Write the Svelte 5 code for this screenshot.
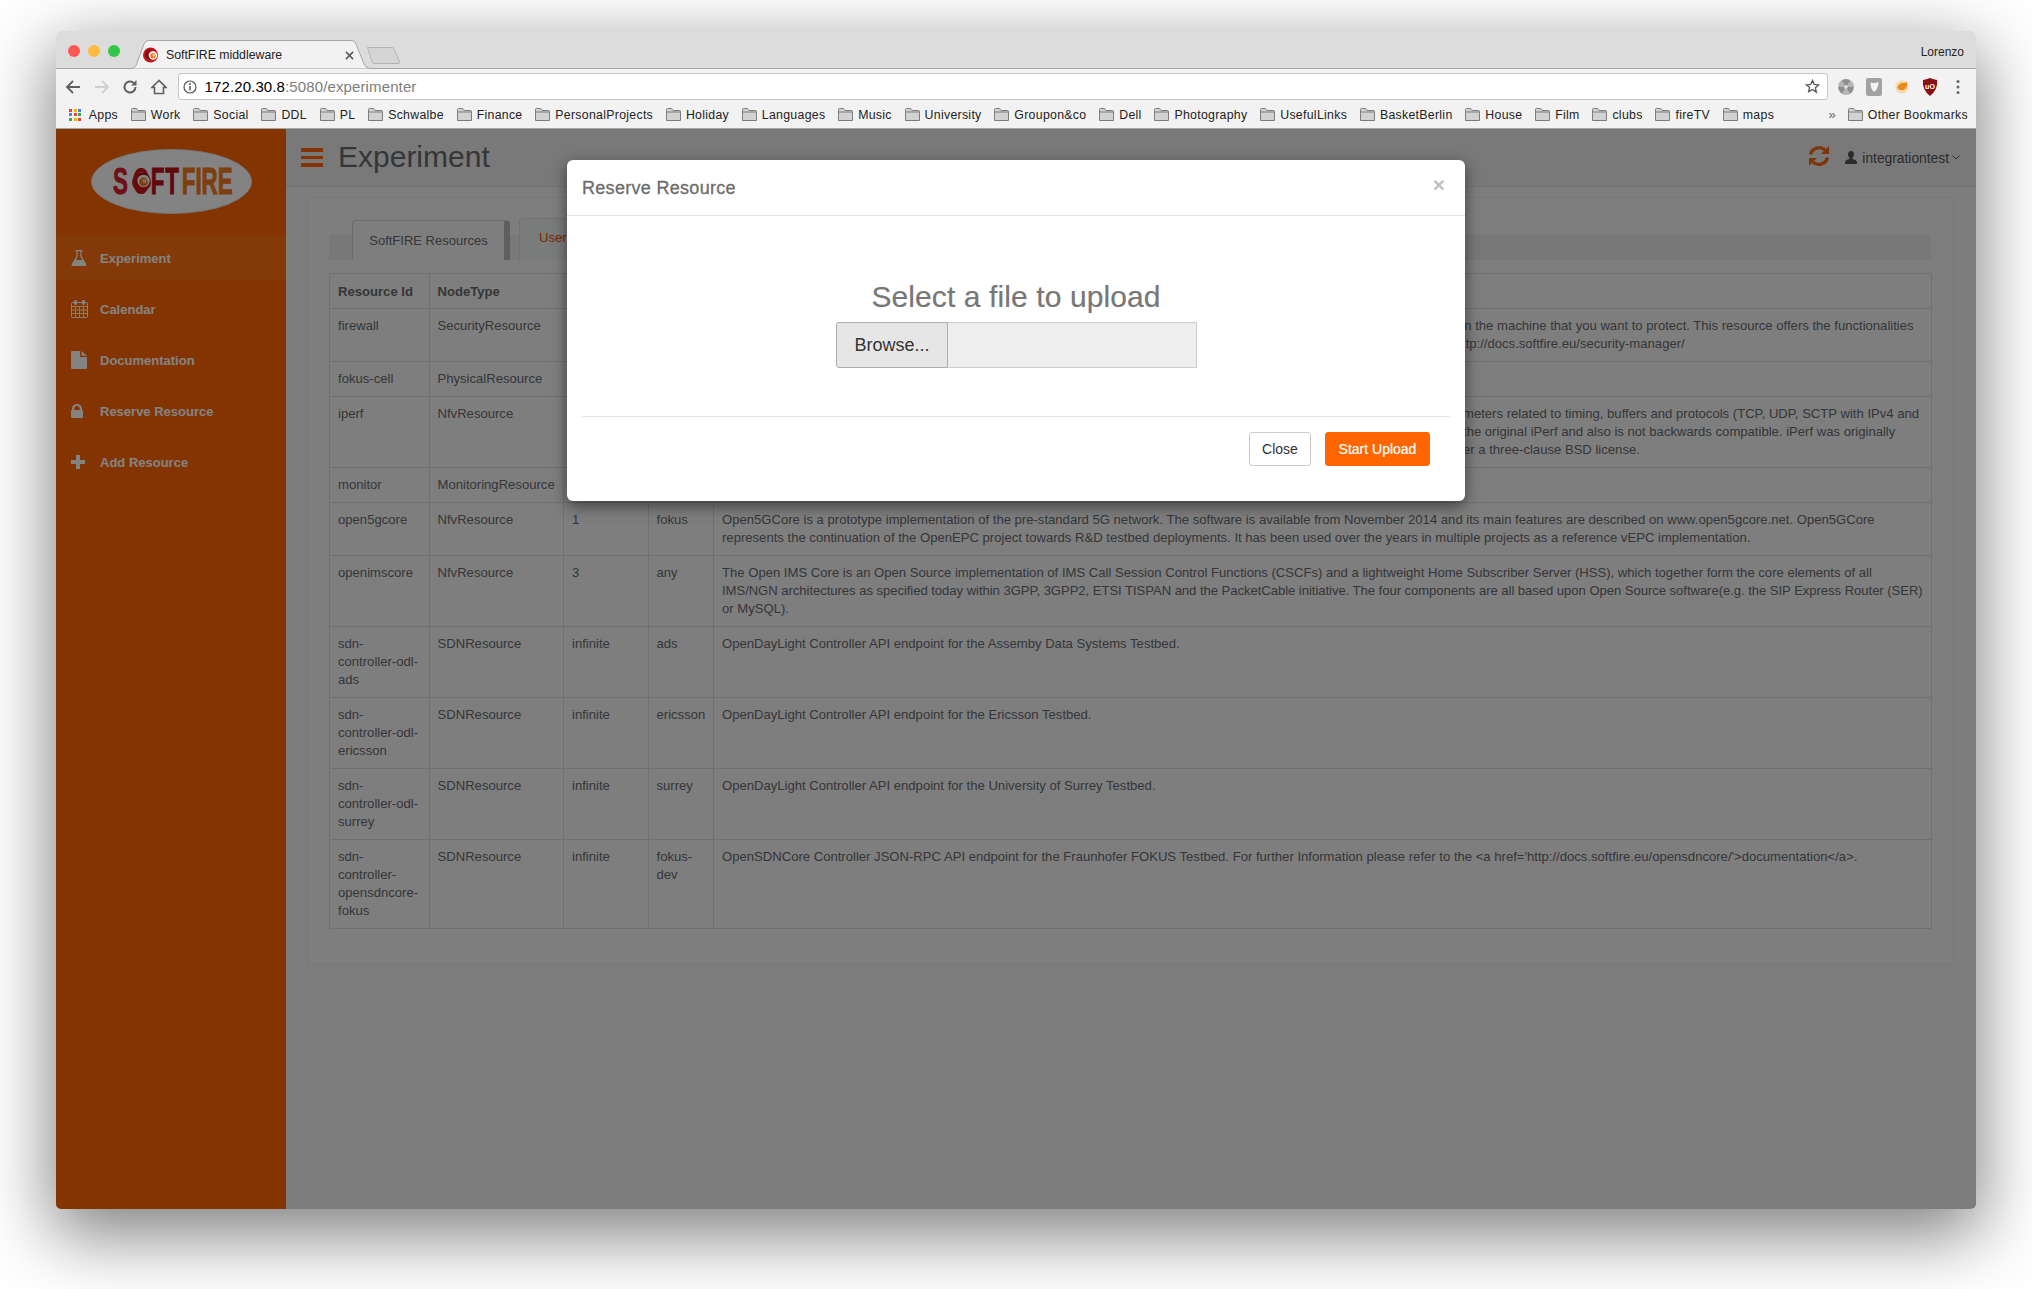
<script>
  const marks = ['Work','Social','DDL','PL','Schwalbe','Finance','PersonalProjects','Holiday','Languages','Music','University','Groupon&co','Dell','Photography','UsefulLinks','BasketBerlin','House','Film','clubs','fireTV','maps'];
  const appsColors = ['#e8453c','#f4b400','#4285f4','#4285f4','#e8453c','#34a853','#34a853','#f4b400','#e8453c'];
  const nav = [
    { label: 'Experiment', icon: 'flask', active: true },
    { label: 'Calendar', icon: 'calendar' },
    { label: 'Documentation', icon: 'file' },
    { label: 'Reserve Resource', icon: 'lock' },
    { label: 'Add Resource', icon: 'plus' }
  ];
  const odl = 'OpenDayLight Controller API endpoint for the ';
  const rows = [
    { id: ['firewall'], type: 'SecurityResource', card: '', bed: [''], indent: 735, desc: ['on the machine that you want to protect. This resource offers the functionalities'], second: { indent: 740, text: 'ttp://docs.softfire.eu/security-manager/' } },
    { id: ['fokus-cell'], type: 'PhysicalResource', card: '', bed: [''], desc: [''] },
    { id: ['iperf'], type: 'NfvResource', card: '', bed: [''], indent: 741, desc: ['meters related to timing, buffers and protocols (TCP, UDP, SCTP with IPv4 and', 'the original iPerf and also is not backwards compatible. iPerf was originally', 'er a three-clause BSD license.'] },
    { id: ['monitor'], type: 'MonitoringResource', card: '', bed: [''], desc: [''] },
    { id: ['open5gcore'], type: 'NfvResource', card: '1', bed: ['fokus'], desc: ['Open5GCore is a prototype implementation of the pre-standard 5G network. The software is available from November 2014 and its main features are described on www.open5gcore.net. Open5GCore', 'represents the continuation of the OpenEPC project towards R&D testbed deployments. It has been used over the years in multiple projects as a reference vEPC implementation.'] },
    { id: ['openimscore'], type: 'NfvResource', card: '3', bed: ['any'], tight: 1, desc: ['The Open IMS Core is an Open Source implementation of IMS Call Session Control Functions (CSCFs) and a lightweight Home Subscriber Server (HSS), which together form the core elements of all', 'IMS/NGN architectures as specified today within 3GPP, 3GPP2, ETSI TISPAN and the PacketCable initiative. The four components are all based upon Open Source software(e.g. the SIP Express Router (SER)', 'or MySQL).'] },
    { id: ['sdn-', 'controller-odl-', 'ads'], type: 'SDNResource', card: 'infinite', bed: ['ads'], desc: [odl + 'Assemby Data Systems Testbed.'] },
    { id: ['sdn-', 'controller-odl-', 'ericsson'], type: 'SDNResource', card: 'infinite', bed: ['ericsson'], desc: [odl + 'Ericsson Testbed.'] },
    { id: ['sdn-', 'controller-odl-', 'surrey'], type: 'SDNResource', card: 'infinite', bed: ['surrey'], desc: [odl + 'University of Surrey Testbed.'] },
    { id: ['sdn-', 'controller-', 'opensdncore-', 'fokus'], type: 'SDNResource', card: 'infinite', bed: ['fokus-', 'dev'], desc: ["OpenSDNCore Controller JSON-RPC API endpoint for the Fraunhofer FOKUS Testbed. For further Information please refer to the <a href='http://docs.softfire.eu/opensdncore/'>documentation</a>."] }
  ];
</script>

{#snippet folder()}
  <svg class="folder" viewBox="0 0 15 13" width="15" height="13"><path d="M.5 12.5V1.5q0-1 1-1h4l1.5 2h6.5q1 0 1 1v9z" fill="#d2d2d2" stroke="#7c7c7c"/><path d="M.5 4h14" stroke="#7c7c7c" fill="none"/></svg>
{/snippet}

<div class="window">
  <div class="tabstrip">
    <div class="lights">
      <span class="light red"></span><span class="light yellow"></span><span class="light green"></span>
    </div>
    <div class="tab">
      <svg class="tabshape" viewBox="0 0 239 29" width="239" height="29"><path d="M0 28.5C4 28 5 26 6 23L13 4Q14 .5 18 .5H220Q224 .5 225 4L233 24Q235 28 239 28.5" fill="#f2f2f2" stroke="#a6a6a6"/></svg>
      <svg class="favicon" viewBox="0 0 16 16" width="16" height="16"><circle cx="7.500" cy="8" r="7.500" fill="#c4161c"/><path d="M2 8a6 6 0 0 1 9-5 5 5 0 0 0-6 5 4 4 0 0 0 7 2.500A5.500 5.500 0 0 1 2 8z" fill="#7d0f14"/><circle cx="10" cy="8.500" r="4.200" fill="#fff"/><circle cx="10" cy="8.800" r="2.800" fill="#f47a20"/><circle cx="10.800" cy="8.300" r="1.200" fill="#ffd9a8"/></svg>
      <span class="tabtitle">SoftFIRE middleware</span>
      <svg class="tabx" viewBox="0 0 10 10" width="9" height="9"><path d="M1 1l8 8M9 1l-8 8" stroke="#5a5a5a" stroke-width="1.700"/></svg>
    </div>
    <svg class="newtab" viewBox="0 0 33 17" width="33" height="17"><path d="M.5.500H25q1.500 0 2 1.500l5.500 13q.3 1.500-1.500 1.500H7q-1.500 0-2-1.500L.5.500z" fill="#d5d5d5" stroke="#b4b4b4"/></svg>
    <span class="profile">Lorenzo</span>
  </div>

  <div class="toolbar">
    <div class="navbtns">
      <span class="nbtn"><svg viewBox="0 0 16 16" width="16" height="16"><path d="M15 8H2M8 2L2 8l6 6" fill="none" stroke="#5f5f5f" stroke-width="1.800"/></svg></span>
      <span class="nbtn"><svg viewBox="0 0 16 16" width="16" height="16"><path d="M1 8h13M8 2l6 6-6 6" fill="none" stroke="#d0d0d0" stroke-width="1.800"/></svg></span>
      <span class="nbtn"><svg viewBox="0 0 16 16" width="16" height="16"><path d="M13.500 8a5.500 5.500 0 1 1-1.700-4" fill="none" stroke="#5f5f5f" stroke-width="2"/><path d="M14.500 1v5.500H9z" fill="#5f5f5f"/></svg></span>
      <span class="nbtn"><svg viewBox="0 0 16 16" width="16" height="16"><path d="M8 1.500L1 8.500h2.500v6h9v-6H15z" fill="none" stroke="#5f5f5f" stroke-width="1.600"/></svg></span>
    </div>
    <div class="urlbar">
      <svg class="info" viewBox="0 0 14 14" width="14" height="14"><circle cx="7" cy="7" r="6" fill="none" stroke="#555" stroke-width="1.200"/><path d="M7 6v4.500" stroke="#555" stroke-width="1.500"/><circle cx="7" cy="4" r="1" fill="#555"/></svg>
      <span class="url"><b>172.20.30.8</b><span class="path">:5080/experimenter</span></span>
      <svg class="star" viewBox="0 0 16 16" width="15" height="15"><path d="M8 1.500l1.900 4.300 4.700.5-3.500 3.100 1 4.600L8 11.100 3.900 13.500l1-4.600L1.400 6.300l4.700-.5z" fill="none" stroke="#555" stroke-width="1.400"/></svg>
    </div>
    <div class="exts">
      <span class="ext"><svg viewBox="0 0 18 18" width="18" height="18"><circle cx="9" cy="9" r="8" fill="#b5b5b5"/><path d="M9 9L5 2.500a8 8 0 0 1 8 0zM9 9H16.500a8 8 0 0 1-3.500 6.500zM9 9L5 15.500A8 8 0 0 1 1.500 9z" fill="#8e8e8e"/><circle cx="9" cy="9" r="1.800" fill="#e4e4e4"/></svg></span>
      <span class="ext"><svg viewBox="0 0 16 18" width="16" height="18"><rect width="16" height="18" rx="2" fill="#a2a2a2"/><path d="M4.500 4.500q4 1 8-.5 0 7-4.500 10Q4.500 11 4.500 4.500z" fill="#f4f4f4"/></svg></span>
      <span class="ext"><svg viewBox="0 0 18 18" width="18" height="18"><circle cx="9" cy="9" r="6.500" fill="#f5d9a8"/><path d="M4 10q2-6 9-5l1-2q1 5-2 8t-8-1z" fill="#e98a1f"/></svg></span>
      <span class="ext"><svg viewBox="0 0 18 20" width="16" height="18"><path d="M1 2q4 0 8-2 4 2 8 2 1 11-8 18Q0 13 1 2z" fill="#8a0f10"/><text x="9" y="12" class="ublock">uO</text></svg></span>
      <span class="ext"><svg viewBox="0 0 4 16" width="4" height="16"><circle cx="2" cy="2.500" r="1.500" fill="#666"/><circle cx="2" cy="8" r="1.500" fill="#666"/><circle cx="2" cy="13.500" r="1.500" fill="#666"/></svg></span>
    </div>
  </div>

  <div class="bookmarks">
    <span class="apps">{#each appsColors as c}<i style="background:{c}"></i>{/each}</span>
    <span class="mark appsmark">Apps</span>
    {#each marks as m}
      <span class="mark">{@render folder()}{m}</span>
    {/each}
    <span class="chev">»</span>
    <span class="mark other">{@render folder()}Other Bookmarks</span>
  </div>

  <div class="app">
    <aside class="sidebar">
      <div class="logo">
        <svg viewBox="0 0 161 65" width="161" height="65">
          <ellipse cx="80.500" cy="32.500" rx="80" ry="32" fill="#fff" stroke="#e4e4e4"/>
          <text x="22" y="45" class="logotext"><tspan fill="#dc1f2b" stroke="#dc1f2b" class="ls">S</tspan><tspan fill="#c9161f" class="ls" dx="6">O</tspan><tspan fill="#bb111c" stroke="#bb111c" class="ls">FT</tspan><tspan fill="#f47a20" stroke="#f47a20" dx="3">FIRE</tspan></text>
          <circle cx="50.500" cy="33" r="9.500" fill="#c9161f"/>
          <path d="M50.500 24a9 9 0 0 1 8.500 5 7 7 0 0 0-12 5 6 6 0 0 0 2 5 9 9 0 0 1 1.500-15z" fill="#9d0f17"/>
          <circle cx="52.500" cy="32" r="6.200" fill="#fff"/>
          <circle cx="52.500" cy="33" r="4.400" fill="#f47a20"/>
          <circle cx="53.500" cy="32" r="2" fill="#ffd9a8"/>
        </svg>
      </div>
      <nav class="menu">
        {#each nav as n}
          <div class="item" class:active={n.active}>
            <span class="micon">
              {#if n.icon === 'flask'}
                <svg viewBox="0 0 16 16" width="16" height="16"><path d="M4.500 0h7v1.200h-1V6l4.700 8q.7 2-1.200 2H2q-1.900 0-1.200-2L5.500 6V1.200h-1zM6.700 1.200v5.200L4.800 10h6.400L9.300 6.400V1.200z" fill="#fff"/></svg>
              {:else if n.icon === 'calendar'}
                <svg viewBox="0 0 17 18" width="17" height="18"><path d="M1.500 2.500h14q1 0 1 1v13q0 1-1 1h-14q-1 0-1-1v-13q0-1 1-1z" fill="none" stroke="#fff"/><path d="M.5 6.500h16M.5 10h16M.5 13.500h16M4.500 6.500v11M8.500 6.500v11M12.500 6.500v11" stroke="#fff" stroke-width=".9"/><rect x="3" width="3" height="5" rx="1.400" fill="#fff"/><rect x="11" width="3" height="5" rx="1.400" fill="#fff"/></svg>
              {:else if n.icon === 'file'}
                <svg viewBox="0 0 16 18" width="16" height="18"><path d="M0 1q0-1 1-1h8v5q0 1 1 1h6v11q0 1-1 1H1q-1 0-1-1zM10.500 0L16 4.800h-5.500z" fill="#fff"/></svg>
              {:else if n.icon === 'lock'}
                <svg viewBox="0 0 12 14" width="12" height="14"><path d="M1 6V4.500a5 4.500 0 0 1 10 0V6h.2q.8 0 .8.800V13q0 1-1 1H1q-1 0-1-1V6.800Q0 6 .8 6zM3.200 6h5.600V4.500a2.800 2.500 0 0 0-5.600 0z" fill="#fff"/></svg>
              {:else}
                <svg viewBox="0 0 14 14" width="14" height="14"><path d="M5 0h4v5h5v4H9v5H5V9H0V5h5z" fill="#fff"/></svg>
              {/if}
            </span>
            <span class="mlabel">{n.label}</span>
          </div>
        {/each}
      </nav>
    </aside>

    <main class="main">
      <header class="head">
        <span class="burger"><i></i><i></i><i></i></span>
        <h1>Experiment</h1>
        <svg class="refresh" viewBox="0 0 22 22" width="22" height="22"><path d="M2.500 9.500A8.800 8.800 0 0 1 17 5" fill="none" stroke="#f26a0f" stroke-width="3.400"/><path d="M21 1v8h-8z" fill="#f26a0f"/><path d="M19.500 12.500A8.800 8.800 0 0 1 5 17" fill="none" stroke="#f26a0f" stroke-width="3.400"/><path d="M1 21v-8h8z" fill="#f26a0f"/></svg>
        <svg class="user" viewBox="0 0 12 13" width="12" height="13"><path d="M6 0c2 0 3 1.500 3 3.300 0 1.500-.7 2.900-1.500 3.500l.2 1.200C10 8.800 12 9.500 12 11.500V13H0v-1.500C0 9.500 2 8.800 4.300 8l.2-1.200C3.700 6.200 3 4.800 3 3.300 3 1.500 4 0 6 0z" fill="#555"/></svg>
        <span class="uname">integrationtest</span>
        <svg class="caret" viewBox="0 0 8 5" width="8" height="5"><path d="M.5.500L4 4 7.500.5" fill="none" stroke="#676a6c"/></svg>
      </header>

      <section class="panel">
        <div class="tabs">
          <div class="ptab on">SoftFIRE Resources</div>
          <div class="ptab off">User Resources</div>
        </div>
        <table>
          <colgroup><col class="c1"/><col class="c2"/><col class="c3"/><col class="c4"/><col/></colgroup>
          <thead>
            <tr><th>Resource Id</th><th>NodeType</th><th></th><th></th><th></th></tr>
          </thead>
          <tbody>
            {#each rows as r}
              <tr>
                <td>{#each r.id as l}<span class="ln">{l}</span>{/each}</td>
                <td>{r.type}</td>
                <td>{r.card}</td>
                <td>{#each r.bed as l}<span class="ln">{l}</span>{/each}</td>
                <td>
                  {#each r.desc as l, i}<span class="ln" class:tight={r.tight === i} style="padding-left:{r.indent ?? 0}px">{l}</span>{/each}
                  {#if r.second}<span class="ln" style="padding-left:{r.second.indent}px">{r.second.text}</span>{/if}
                </td>
              </tr>
            {/each}
          </tbody>
        </table>
      </section>
    </main>
  </div>

  <div class="backdrop">
    <div class="modal">
      <div class="mhead">
        <h4>Reserve Resource</h4>
        <span class="mclose">×</span>
      </div>
      <div class="mbody">
        <h3>Select a file to upload</h3>
        <div class="filegroup">
          <span class="browse">Browse...</span>
          <span class="filename"></span>
        </div>
      </div>
      <div class="mfoot">
        <button class="btn close">Close</button>
        <button class="btn start">Start Upload</button>
      </div>
    </div>
  </div>
</div>

<style>
  :global(body) { margin: 0; background: #fff; overflow: hidden; }
  :global(#app) { height: 1289px; }
  .window {
    position: relative;
    box-sizing: border-box;
    margin: 31px 0 0 56px;
    width: 1920px;
    height: 1178px;
    border-radius: 5px;
    font-family: "Liberation Sans", Arial, sans-serif;
    background: #f2f2f2;
    box-shadow: 0 22px 70px 4px rgba(0,0,0,.5);
  }

  .tabstrip {
    box-sizing: border-box;
    height: 38px;
    display: flex;
    background: #dcdcdc;
    border-bottom: 1px solid #a6a6a6;
    border-radius: 5px 5px 0 0;
  }
  .lights { display: flex; gap: 8px; padding: 14px 0 0 12px; margin-right: 11px; }
  .light { width: 12px; height: 12px; border-radius: 50%; }
  .red { background: #fc5753; }
  .yellow { background: #fdbc40; }
  .green { background: #33c748; }
  .tab {
    position: relative;
    width: 239px;
    height: 29px;
    margin-top: 9px;
    display: flex;
    align-items: center;
    font-size: 12.300px;
    color: #222;
  }
  .tabshape { position: absolute; left: 0; top: 0; }
  .favicon { position: relative; margin-left: 12px; }
  .tabtitle { position: relative; margin-left: 7px; }
  .tabx { position: absolute; left: 214px; top: 11px; }
  .newtab { margin: 16px 0 0 -3px; }
  .profile { margin-left: auto; padding: 14px 12px 0 0; font-size: 12px; color: #222; }

  .toolbar { box-sizing: border-box; height: 32px; padding-top: 3px; display: flex; align-items: center; background: #f2f2f2; }
  .navbtns { display: flex; padding-left: 3px; gap: .5px; }
  .nbtn { width: 28px; height: 28px; display: flex; align-items: center; justify-content: center; }
  .urlbar {
    box-sizing: border-box;
    flex: 1;
    height: 27px;
    margin-left: 5px;
    display: flex;
    align-items: center;
    background: #fff;
    border: 1px solid #c6c6c6;
    border-radius: 3px;
    padding: 0 7px 0 4px;
  }
  .info { flex: none; margin-right: 8px; }
  .url { font-size: 15px; letter-spacing: .12px; color: #000; flex: 1; }
  .url b { font-weight: 400; }
  .path { color: #7d7d7d; }
  .exts { display: flex; margin-left: 4px; padding-right: 4px; }
  .ext { width: 28px; height: 28px; display: flex; align-items: center; justify-content: center; }
  .ublock { font: bold 8px "Liberation Sans", sans-serif; fill: #fff; text-anchor: middle; }

  .bookmarks {
    box-sizing: border-box;
    height: 28px;
    display: flex;
    align-items: center;
    gap: 12.800px;
    padding: 0 8px 0 13px;
    background: #f2f2f2;
    border-bottom: 1px solid #a6a6a6;
    font-size: 12.300px;
    letter-spacing: .3px;
    color: #222;
  }
  .apps { display: grid; grid-template-columns: repeat(3, 3px); gap: 1.500px; margin-right: -5px; }
  .apps i { width: 3px; height: 3px; }
  .mark { display: inline-flex; align-items: center; white-space: nowrap; }
  .folder { margin-right: 5px; flex: none; }
  .chev { margin-left: auto; color: #666; font-size: 13px; margin-right: -1px; }

  .app { display: flex; height: 1080px; border-radius: 0 0 5px 5px; overflow: hidden; }
  .sidebar { width: 230px; flex: none; background: #ff6600; }
  .logo { height: 106px; box-sizing: border-box; padding: 20px 0 0 35px; }
  .logo svg { display: block; }
  .logotext { font: bold 36px "Liberation Sans", sans-serif; stroke-width: 1px; transform: scaleX(.62); transform-origin: 22px 45px; }
  .ls { letter-spacing: 1.500px; }
  .menu { display: flex; flex-direction: column; gap: 6px; }
  .item { height: 45px; display: flex; align-items: center; color: #fff; font-weight: 700; font-size: 13px; }
  .item.active { background: #ff6f10; }
  .micon { width: 44px; padding-left: 15px; box-sizing: border-box; display: flex; align-items: center; flex: none; }
  .mlabel { white-space: nowrap; position: relative; top: 1px; }

  .main { flex: 1; background: #f3f3f4; min-width: 0; }
  .head {
    box-sizing: border-box;
    height: 58px;
    display: flex;
    align-items: center;
    padding: 0 16px 0 15px;
    background: #ececed;
    border-bottom: 1px solid #e2e2e2;
    color: #676a6c;
  }
  .burger { display: flex; flex-direction: column; gap: 4px; width: 22px; }
  .burger i { display: block; height: 3.500px; background: #ff6600; }
  .head h1 { margin: 0 auto 0 15px; font-size: 30px; font-weight: 400; line-height: 1; position: relative; top: -1px; }
  .refresh { margin: 0 15px 4px 0; }
  .user { margin-right: 5px; }
  .uname { font-size: 13.800px; margin: 2px 3px 0 0; color: #555; }

  .panel {
    box-sizing: border-box;
    height: 768px;
    margin: 10px 22px 0 21px;
    padding: 22px 22px 0 21px;
    background: #f6f6f7;
    border: 1px solid #e7eaec;
    color: #676a6c;
    font-size: 13.100px;
  }
  .tabs {
    display: flex;
    align-items: flex-end;
    height: 40px;
    gap: 9px;
    padding-left: 23px;
    background: linear-gradient(transparent 15px, #e9eaeb 15px);
    margin-bottom: 13px;
  }
  .ptab { box-sizing: border-box; white-space: nowrap; }
  .on {
    width: 158px;
    height: 40px;
    line-height: 39px;
    text-align: center;
    background: #f6f6f7;
    border: 1px solid #d4d5d7;
    border-bottom: 0;
    border-right: 6px solid #b9babc;
    border-radius: 4px 4px 0 0;
    font-size: 13px;
  }
  .off {
    height: 42px;
    margin-top: -2px;
    line-height: 38px;
    padding-left: 19px;
    width: 200px;
    color: #ed5100;
    background: #eeeff0;
    border: 1px solid #dcdde0;
    border-bottom: 0;
    border-radius: 4px 4px 0 0;
  }
  table { border-collapse: collapse; table-layout: fixed; width: 1603px; line-height: 18px; }
  .c1 { width: 99.500px; }
  .c2 { width: 134.500px; }
  .c3 { width: 84.500px; }
  .c4 { width: 65.500px; }
  th, td { border: 1px solid #d9dbde; padding: 8px; text-align: left; vertical-align: top; white-space: nowrap; height: 18px; overflow: hidden; }
  th { font-weight: 700; padding: 9px 8px 7px; }
  .ln { display: block; }
  .tight { letter-spacing: -.05px; }

  .backdrop { position: absolute; left: 0; right: 0; top: 98px; bottom: 0; background: rgba(0,0,0,.486); border-radius: 0 0 5px 5px; }
  .modal {
    position: absolute;
    left: 511px;
    top: 31px;
    width: 898px;
    height: 341px;
    box-sizing: border-box;
    background: #fff;
    border-radius: 6px;
    box-shadow: 0 5px 15px rgba(0,0,0,.5);
    color: #676a6c;
  }
  .mhead {
    box-sizing: border-box;
    height: 56px;
    padding: 0 15px;
    display: flex;
    justify-content: space-between;
    border-bottom: 1px solid #e5e5e5;
  }
  .mhead h4 { margin: 13px 0 0; font-size: 18px; font-weight: 400; line-height: 30px; color: #6c6c6c; -webkit-text-stroke: .3px #6c6c6c; letter-spacing: .3px; }
  .mclose { font-size: 21px; font-weight: 700; color: #c0c0c0; line-height: 1; margin: 14px 5px 0 0; }
  .mbody { box-sizing: border-box; height: 201px; padding-top: 64px; text-align: center; border-bottom: 1px solid #e5e5e5; margin: 0 15px; }
  .mbody h3 { margin: 0 0 9px; font-size: 30px; font-weight: 400; line-height: 33px; color: #777; letter-spacing: .1px; -webkit-text-stroke: .2px #777; }
  .filegroup { display: flex; width: 361px; height: 46px; margin: 0 auto 0 254px; font-size: 18px; }
  .browse {
    box-sizing: border-box;
    width: 112px;
    line-height: 44px;
    background: #e6e6e6;
    border: 1px solid #adadad;
    border-radius: 3px 0 0 3px;
    color: #333;
  }
  .filename { flex: 1; background: #eee; border: 1px solid #ccc; border-left: 0; }
  .mfoot { display: flex; justify-content: flex-end; gap: 14px; padding: 15px 35px 0 0; }
  .btn { box-sizing: border-box; height: 34px; border-radius: 3px; font: 14px "Liberation Sans", Arial, sans-serif; padding: 0; cursor: pointer; }
  .close { width: 62px; background: #fff; border: 1px solid #ccc; color: #333; }
  .start { width: 105px; background: #ff6600; border: 1px solid #ff6600; color: #fff; -webkit-text-stroke: .2px #fff; }
</style>
